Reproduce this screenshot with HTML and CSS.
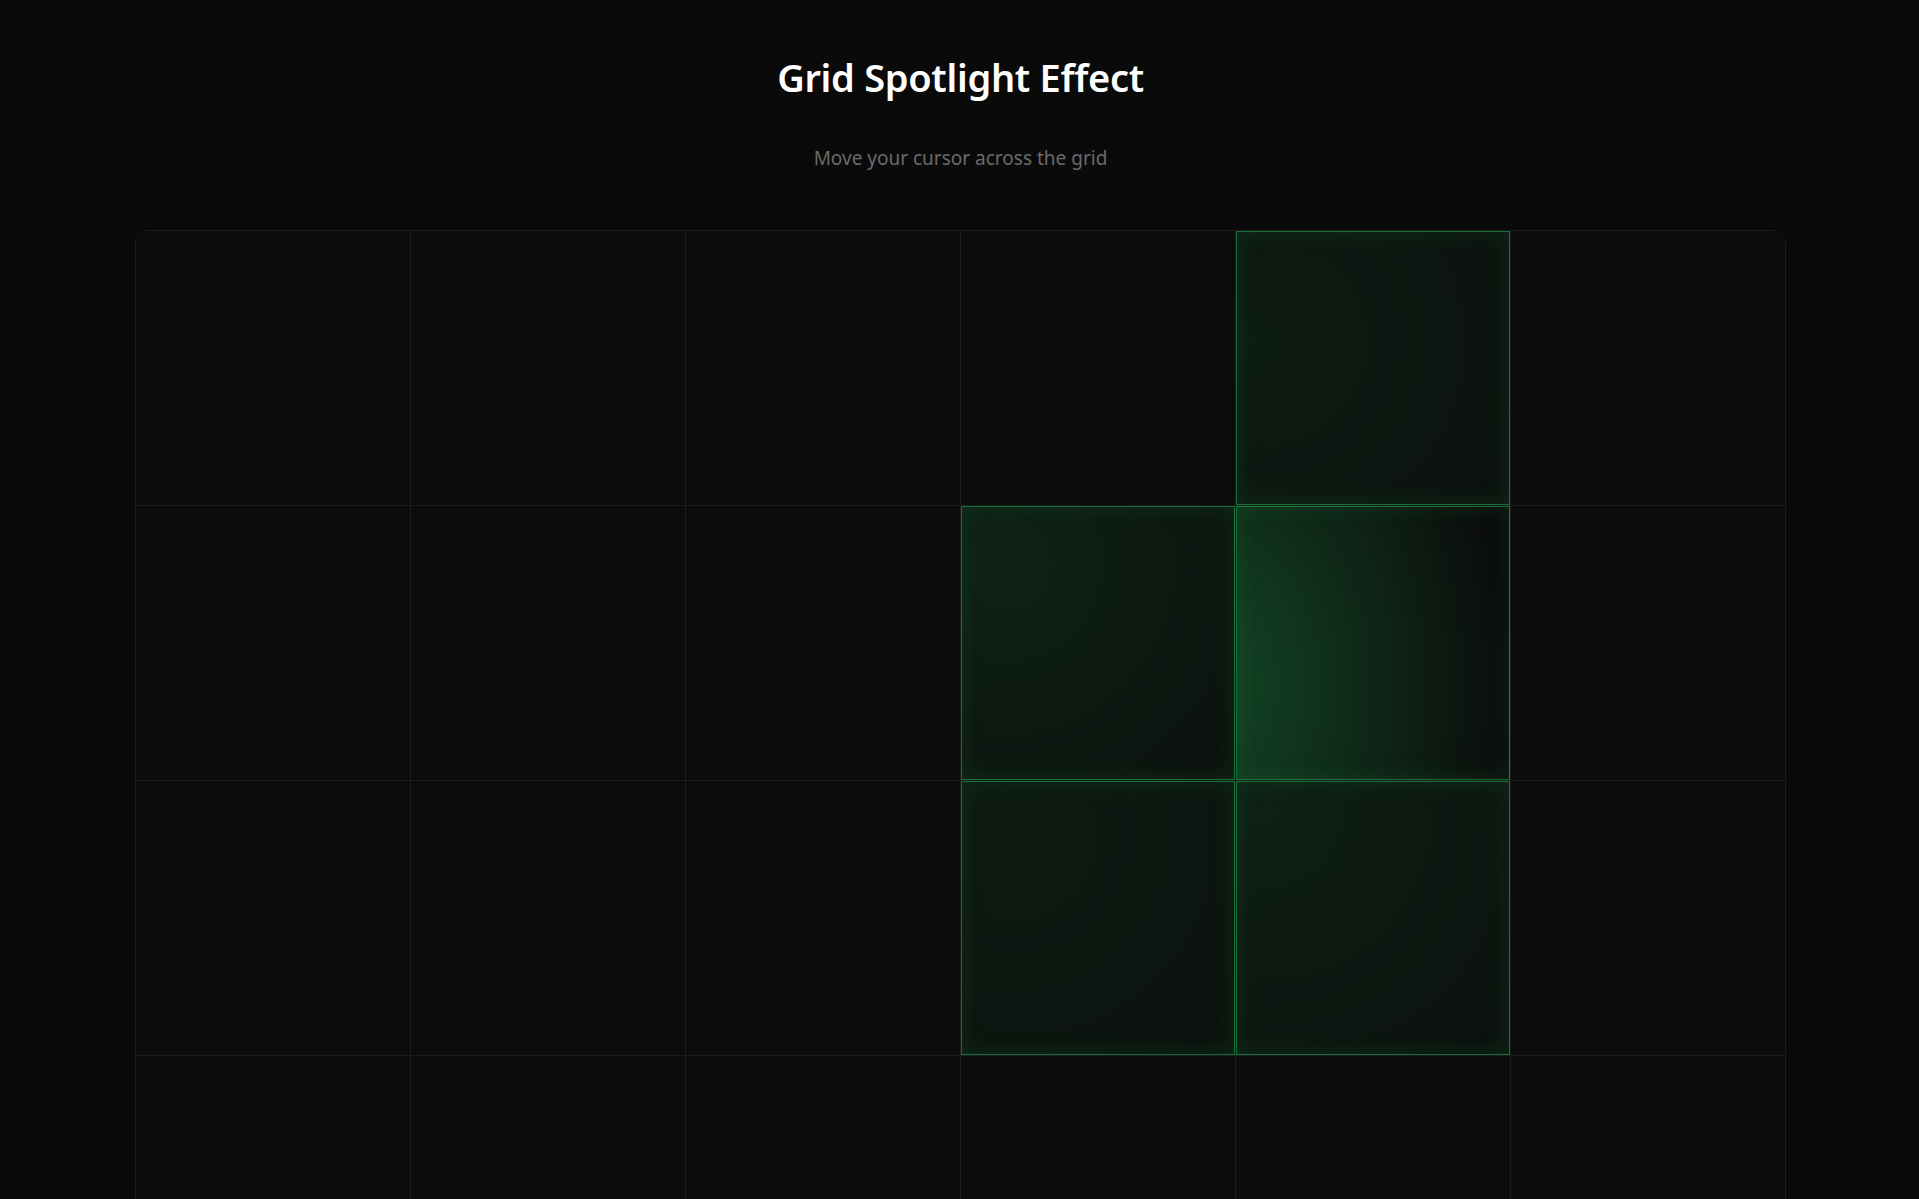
FILE: index.html
```html
<!DOCTYPE html>
<html lang="en">
<head>
<meta charset="utf-8">
<title>Grid Spotlight Effect</title>
<link rel="stylesheet" href="styles.css">
</head>
<body>
<main class="page">
  <header class="intro">
    <h1 class="title">Grid Spotlight Effect</h1>
    <p class="subtitle">Move your cursor across the grid</p>
  </header>

  <section class="grid">
    <!-- row 1 -->
    <div class="cell"></div>
    <div class="cell"></div>
    <div class="cell"></div>
    <div class="cell"></div>
    <div class="cell is-lit" style="--gx: 10%; --gy: 40%; --glow: .06"></div>
    <div class="cell"></div>
    <!-- row 2 -->
    <div class="cell"></div>
    <div class="cell"></div>
    <div class="cell"></div>
    <div class="cell is-lit" style="--gx: 15%; --gy: 20%; --glow: .09"></div>
    <div class="cell is-lit is-hot" style="--gx: -12%; --gy: 65%; --glow: .32"></div>
    <div class="cell"></div>
    <!-- row 3 -->
    <div class="cell"></div>
    <div class="cell"></div>
    <div class="cell"></div>
    <div class="cell is-lit" style="--gx: 20%; --gy: 20%; --glow: .05"></div>
    <div class="cell is-lit" style="--gx: 10%; --gy: 10%; --glow: .08"></div>
    <div class="cell"></div>
    <!-- row 4 -->
    <div class="cell"></div>
    <div class="cell"></div>
    <div class="cell"></div>
    <div class="cell"></div>
    <div class="cell"></div>
    <div class="cell"></div>
  </section>
</main>
</body>
</html>
```

FILE: styles.css
```css
* {
  box-sizing: border-box;
}

html,
body {
  margin: 0;
  background: #0a0a0a;
}

body {
  font-family: "Noto Sans", "Open Sans", sans-serif;
  color: #ffffff;
}

.page {
  display: flex;
  flex-direction: column;
  align-items: center;
  padding: 53px 0 0 2px;
}

.intro {
  display: flex;
  flex-direction: column;
  align-items: center;
}

.title {
  margin: 0;
  font-size: 38px;
  line-height: 48px;
  font-weight: 600;
  letter-spacing: -0.3px;
}

.subtitle {
  margin: 44px 0 0;
  font-size: 19px;
  line-height: 26px;
  color: #6a6a6a;
}

/* board: the background shows through the 1px gaps as grid lines */
.grid {
  margin-top: 59px;
  display: grid;
  grid-template-columns: repeat(6, 274px);
  grid-auto-rows: 274px;
  gap: 1px;
  padding: 1px;
  background: #1c1c1c;
  border-radius: 12px;
  overflow: hidden;
}

.cell {
  background: #0b0b0b;
  border: 1px solid transparent;
}

.cell.is-lit {
  border-color: rgba(34, 197, 94, 0.5);
  background:
    radial-gradient(circle at var(--gx) var(--gy), rgba(34, 197, 94, var(--glow)), rgba(34, 197, 94, 0) 90%),
    linear-gradient(rgba(34, 197, 94, 0.035), rgba(34, 197, 94, 0.035)),
    #0b0b0b;
  box-shadow: inset 0 0 22px rgba(34, 197, 94, 0.13);
}

/* the cell under the cursor: a wide, tall falloff from its left edge */
.cell.is-hot {
  background:
    radial-gradient(ellipse 115% 160% at var(--gx) var(--gy), rgba(34, 197, 94, var(--glow)), rgba(34, 197, 94, 0) 100%),
    #0b0b0b;
}
```
